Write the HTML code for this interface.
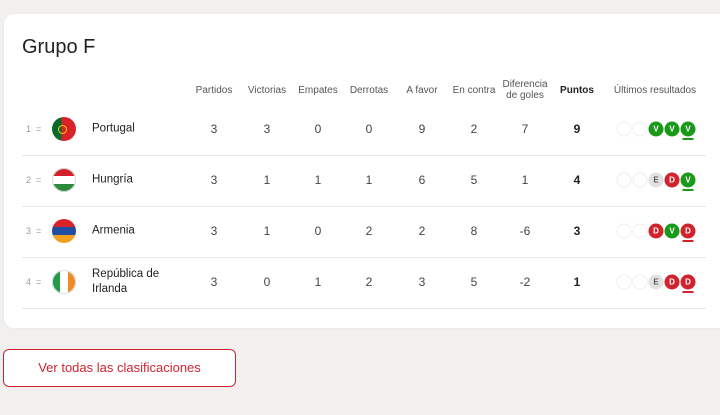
<!DOCTYPE html>
<html><head><style>
body{margin:0;width:720px;height:415px;background:#f2f0ee;font-family:"Liberation Sans",sans-serif;position:relative;overflow:hidden;color:#333}
.card{position:absolute;left:4px;top:14px;width:730px;height:314px;background:#fff;border-radius:10px;box-shadow:0 0 2px rgba(0,0,0,.06)}
h1{position:absolute;left:22px;top:36px;margin:0;font-size:20px;font-weight:normal;color:#222}
.t{position:absolute;font-size:10px;color:#555;text-align:center;transform:translateX(-50%);line-height:11px;white-space:nowrap}
.n{position:absolute;font-size:12px;color:#444;transform:translate(-50%,-50%)}
.b{font-weight:bold;color:#222}
.sep{position:absolute;left:22px;width:684px;height:1px;background:#e6e6e6}
.flag{position:absolute;left:52px;width:24px;height:24px;border-radius:50%;overflow:hidden;transform:translateY(-50%)}
.name{position:absolute;left:92px;font-size:11.5px;color:#222;transform:translateY(-50%);line-height:15px}
.pos{position:absolute;left:26px;font-size:9px;color:#999;transform:translateY(-50%)}
.c{position:absolute;width:15px;height:15px;border-radius:50%;transform:translate(-50%,-50%);font-size:8px;font-weight:bold;color:#fff;text-align:center;line-height:15px}
.e0{border:1px solid #eee;width:13px;height:13px;background:#fff}
.V{background:#1a9a1a}.D{background:#d1232e}.E{background:#e2e2e2;color:#555}
.u{position:absolute;width:11px;height:2px;transform:translateX(-50%)}
.btn{position:absolute;left:3px;top:349px;width:231px;height:36px;border:1px solid #d1232e;border-radius:6px;background:#fff;color:#d1232e;font-size:13px;text-align:center;line-height:36px}
</style></head><body>
<div class="card"></div>
<h1>Grupo F</h1>
<div class="t" style="left:214px;top:85px">Partidos</div>
<div class="t" style="left:267px;top:85px">Victorias</div>
<div class="t" style="left:318px;top:85px">Empates</div>
<div class="t" style="left:369px;top:85px">Derrotas</div>
<div class="t" style="left:422px;top:85px">A favor</div>
<div class="t" style="left:474px;top:85px">En contra</div>
<div class="t" style="left:525px;top:79px">Diferencia<br>de goles</div>
<div class="t b" style="left:577px;top:85px">Puntos</div>
<div class="t" style="left:655px;top:85px">Últimos resultados</div>

<div class="sep" style="top:155px"></div><div class="sep" style="top:206px"></div><div class="sep" style="top:257px"></div><div class="sep" style="top:308px"></div>

<div id="rows"></div>
<div class="pos" style="top:129px">1 &nbsp;=</div>
<div class="pos" style="top:180px">2 &nbsp;=</div>
<div class="pos" style="top:231px">3 &nbsp;=</div>
<div class="pos" style="top:282px">4 &nbsp;=</div>
<div class="flag" style="top:129px;background:linear-gradient(90deg,#0a6a2a 40%,#d9232c 40%)"><div style="position:absolute;left:6px;top:8px;width:7px;height:7px;border-radius:50%;border:1px solid #f5d20a"></div></div>
<div class="flag" style="top:180px;background:linear-gradient(#d1232e 33%,#fff 33%,#fff 67%,#2b8a3e 67%);box-shadow:inset 0 0 0 1px #ddd"></div>
<div class="flag" style="top:231px;background:linear-gradient(#d9232c 33%,#1f4ea0 33%,#1f4ea0 67%,#f2a01e 67%)"></div>
<div class="flag" style="top:282px;background:linear-gradient(90deg,#229a4a 33%,#fff 33%,#fff 67%,#f08a24 67%);box-shadow:inset 0 0 0 1px #ddd"></div>
<div class="name" style="top:129px">Portugal</div>
<div class="name" style="top:180px">Hungría</div>
<div class="name" style="top:231px">Armenia</div>
<div class="name" style="top:282px">República de<br>Irlanda</div>

<script>
var d=[[129,[3,3,0,0,9,2,7,9],'__VVV'],[180,[3,1,1,1,6,5,1,4],'__EDV'],[231,[3,1,0,2,2,8,-6,3],'__DVD'],[282,[3,0,1,2,3,5,-2,1],'__EDD']];
var xs=[214,267,318,369,422,474,525,577],h='';
d.forEach(function(r){r[1].forEach(function(v,i){h+='<div class="n'+(i==7?' b':'')+'" style="left:'+xs[i]+'px;top:'+r[0]+'px">'+v+'</div>';});
for(var i=0;i<5;i++){var c=r[2][i];var x=624+16*i;h+=c=='_'?'<div class="c e0" style="left:'+x+'px;top:'+r[0]+'px"></div>':'<div class="c '+c+'" style="left:'+x+'px;top:'+r[0]+'px">'+c+'</div>';}
h+='<div class="u '+r[2][4]+'" style="left:688px;top:'+(r[0]+9)+'px"></div>';});
document.getElementById('rows').innerHTML=h;
</script>
<div class="btn">Ver todas las clasificaciones</div>
</body></html>
